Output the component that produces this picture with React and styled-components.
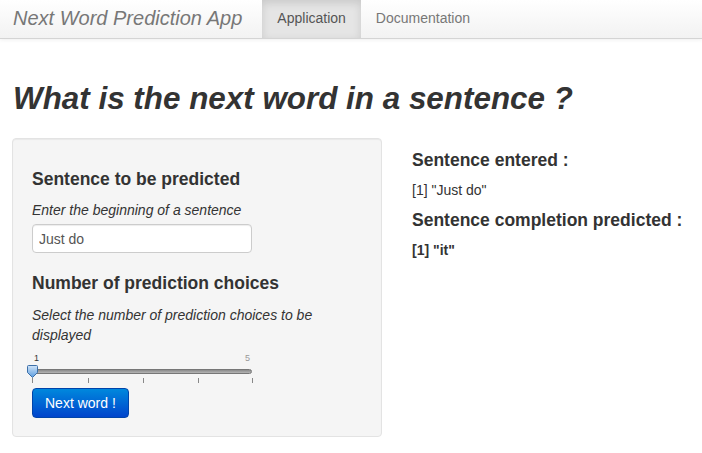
import React, { useState } from 'react'
import styled, { createGlobalStyle } from 'styled-components'

const GlobalStyle = createGlobalStyle`
  html, body {
    margin: 0;
    padding: 0;
    background: #fff;
    font-family: "Liberation Sans", Arial, sans-serif;
    font-size: 14px;
    line-height: 20px;
    color: #333;
  }
`

const Navbar = styled.div`
  display: flex;
  align-items: stretch;
  height: 38px;
  background: linear-gradient(to bottom, #ffffff, #f2f2f2);
  border-bottom: 1px solid #d4d4d4;
  box-shadow: 0 1px 4px rgba(0, 0, 0, 0.065);
`

const Brand = styled.div`
  display: flex;
  align-items: center;
  padding: 0 20px 2px 13px;
  font-size: 20px;
  font-style: italic;
  color: #777;
`

const Tab = styled.div`
  display: flex;
  align-items: center;
  padding: 0 15px 2px;
  font-size: 14px;
  color: ${p => (p.active ? '#555' : '#777')};
  background: ${p => (p.active ? '#e5e5e5' : 'transparent')};
  box-shadow: ${p => (p.active ? 'inset 0 3px 8px rgba(0, 0, 0, 0.125)' : 'none')};
`

const Page = styled.div`
  padding: 0 12px;
`

const Title = styled.h1`
  margin: 40px 0 0 1px;
  font-size: 31.4px;
  line-height: 40px;
  font-style: italic;
  font-weight: bold;
  color: #333;
`

const Columns = styled.div`
  display: grid;
  grid-template-columns: 370px 1fr;
  column-gap: 30px;
  margin-top: 19px;
`

const Well = styled.div`
  background: #f5f5f5;
  border: 1px solid #e3e3e3;
  border-radius: 4px;
  box-shadow: inset 0 1px 1px rgba(0, 0, 0, 0.05);
  padding: 30px 19px 18px;
`

const Heading = styled.h4`
  margin: 0 0 ${p => p.gap}px;
  font-size: 17.5px;
  line-height: 20px;
  font-weight: bold;
  color: #333;
`

const Help = styled.p`
  margin: 0 0 4px;
  font-style: italic;
  color: #333;
`

const TextInput = styled.input`
  box-sizing: border-box;
  width: 220px;
  height: 29px;
  padding: 4px 6px;
  margin-bottom: 20px;
  border: 1px solid #ccc;
  border-radius: 4px;
  background: #fff;
  font-family: "Liberation Sans", Arial, sans-serif;
  font-size: 14px;
  color: #555;
  box-shadow: inset 0 1px 1px rgba(0, 0, 0, 0.075);
`

const Slider = styled.div`
  position: relative;
  width: 224px;
  height: 36px;
  margin: 7px 0 0 -4px;
`

const SliderLabel = styled.span`
  position: absolute;
  top: 1px;
  left: ${p => p.left}px;
  font-size: 9px;
  line-height: 10px;
  color: ${p => (p.dim ? '#999' : '#333')};
`

const Track = styled.div`
  position: absolute;
  top: 17px;
  left: 0;
  right: 0;
  height: 5px;
  border-radius: 3px;
  background: linear-gradient(to bottom, #8a8a8a, #b5b5b5);
  border: 1px solid #777;
  box-sizing: border-box;
`

const Tick = styled.span`
  position: absolute;
  top: 26px;
  left: ${p => p.left}px;
  width: 1px;
  height: 5px;
  background: #888;
`

const Thumb = styled.svg`
  position: absolute;
  top: 13px;
  left: -1px;
`

const PrimaryButton = styled.button`
  padding: 0 12px;
  height: 30px;
  border: 1px solid #0044aa;
  border-radius: 4px;
  background: linear-gradient(to bottom, #0088dd, #0044cc);
  color: #fff;
  font-family: "Liberation Sans", Arial, sans-serif;
  font-size: 14px;
  cursor: pointer;
`

const Output = styled.div`
  padding-top: 12px;
`

const Result = styled.p`
  margin: 0 0 10px;
  font-size: 14px;
  font-weight: ${p => (p.bold ? 'bold' : 'normal')};
  color: #333;
`

const ticks = [4, 60, 115, 170, 224]

export default function App() {
  const [sentence, setSentence] = useState('Just do')

  return (
    <>
      <GlobalStyle />
      <Navbar>
        <Brand>Next Word Prediction App</Brand>
        <Tab active>Application</Tab>
        <Tab>Documentation</Tab>
      </Navbar>
      <Page>
        <Title>What is the next word in a sentence ?</Title>
        <Columns>
          <Well>
            <Heading gap={11}>Sentence to be predicted</Heading>
            <Help>Enter the beginning of a sentence</Help>
            <TextInput value={sentence} onChange={e => setSentence(e.target.value)} />
            <Heading gap={12}>Number of prediction choices</Heading>
            <Help>Select the number of prediction choices to be displayed</Help>
            <Slider>
              <SliderLabel left={6}>1</SliderLabel>
              <SliderLabel left={217} dim>5</SliderLabel>
              <Track />
              {ticks.map(t => <Tick key={t} left={t} />)}
              <Thumb width="11" height="13" viewBox="0 0 11 13">
                <defs>
                  <linearGradient id="thumbFill" x1="0" y1="0" x2="0" y2="1">
                    <stop offset="0" stopColor="#cfe3f7" />
                    <stop offset="1" stopColor="#5b9de0" />
                  </linearGradient>
                </defs>
                <path d="M1.5 0.5 H9.5 Q10.5 0.5 10.5 1.5 V7.5 L5.5 12.5 L0.5 7.5 V1.5 Q0.5 0.5 1.5 0.5 Z" fill="url(#thumbFill)" stroke="#3c6fa8" />
              </Thumb>
            </Slider>
            <PrimaryButton>Next word !</PrimaryButton>
          </Well>
          <Output>
            <Heading gap={10}>Sentence entered :</Heading>
            <Result>[1] "{sentence}"</Result>
            <Heading gap={10}>Sentence completion predicted :</Heading>
            <Result bold>[1] "it"</Result>
          </Output>
        </Columns>
      </Page>
    </>
  )
}
